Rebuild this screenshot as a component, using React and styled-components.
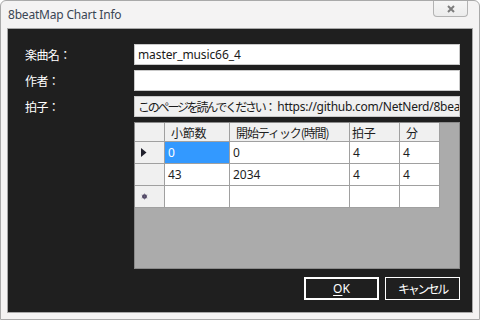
import React from "react";
import styled, { createGlobalStyle } from "styled-components";

const Global = createGlobalStyle`
  html, body { margin: 0; padding: 0; background: #ffffff; }
  body { width: 480px; height: 320px; overflow: hidden; }
`;

const UI = `"Noto Sans", "Noto Sans CJK JP", sans-serif`;
const JP = `"Noto Sans CJK JP", "Noto Sans", sans-serif`;

const Window = styled.div`
  box-sizing: border-box;
  width: 480px;
  height: 320px;
  border: 1px solid #a9a9a9;
  border-radius: 6px 6px 0 0;
  background: #f4f3f3;
  display: flex;
  flex-direction: column;
  padding: 0 6px 6px;
`;

const TitleBar = styled.div`
  height: 27px;
  flex: none;
  display: flex;
  align-items: flex-start;
`;

const Title = styled.div`
  font-family: ${UI};
  font-size: 12px;
  letter-spacing: -0.2px;
  color: #3a4654;
  padding: 6px 0 0 1px;
  line-height: 16px;
`;

const CloseButton = styled.div`
  margin-left: auto;
  margin-right: 5px;
  width: 35px;
  height: 16px;
  box-sizing: border-box;
  border: 1px solid #b3b3b3;
  border-top: none;
  border-radius: 0 0 4px 4px;
  background: linear-gradient(#f6f6f6, #ececec);
  display: flex;
  align-items: center;
  justify-content: center;
`;

const Client = styled.div`
  flex: 1;
  box-sizing: border-box;
  border: 1px solid #a8a8a8;
  background: #1f1f1f;
  padding: 15px 12px 12px 17px;
  display: flex;
  flex-direction: column;
`;

const Form = styled.div`
  flex: 1;
  display: grid;
  grid-template-columns: 109px 1fr;
  grid-template-rows: 21px 21px 21px 1fr;
  row-gap: 5px;
`;

const Label = styled.div`
  font-family: ${JP};
  font-size: 12px;
  letter-spacing: -0.6px;
  color: #ffffff;
  display: flex;
  align-items: center;
`;

const Field = styled.div`
  box-sizing: border-box;
  border: 1px solid #c9c9c9;
  background: ${(p) => (p.$readOnly ? "#f0f0f0" : "#ffffff")};
  font-family: ${UI};
  font-size: 12px;
  letter-spacing: -0.1px;
  color: #1a1a1a;
  padding: 0 3px;
  display: flex;
  align-items: center;
  white-space: nowrap;
  overflow: hidden;
`;

const JpSpan = styled.span`
  font-family: ${JP};
  letter-spacing: ${(p) => p.$ls || "0px"};
`;

const LatinSpan = styled.span`
  font-family: ${UI};
  letter-spacing: ${(p) => p.$ls || "0px"};
`;

const GridView = styled.div`
  box-sizing: border-box;
  border: 1px solid #8a8a8a;
  background: #ababab;
  overflow: hidden;
`;

const Table = styled.div`
  display: grid;
  grid-template-columns: 30px 65px 120px 50px 40px;
  grid-template-rows: 19px 22px 22px 22px;
  width: 305px;
`;

const Cell = styled.div`
  box-sizing: border-box;
  border-right: 1px solid #a0a0a0;
  border-bottom: 1px solid #a0a0a0;
  background: ${(p) => (p.$selected ? "#3399ff" : p.$header ? "#f0f0f0" : "#ffffff")};
  color: ${(p) => (p.$selected ? "#ffffff" : "#1e1e1e")};
  font-family: ${(p) => (p.$header ? JP : UI)};
  font-size: 12px;
  letter-spacing: ${(p) => p.$ls ?? "0px"};
  padding-left: ${(p) => p.$pad ?? 3}px;
  display: flex;
  align-items: center;
  white-space: nowrap;
  overflow: hidden;
`;

const ButtonRow = styled.div`
  flex: none;
  margin-top: 8px;
  display: flex;
  justify-content: flex-end;
  gap: 6px;
`;

const Button = styled.div`
  box-sizing: border-box;
  width: 75px;
  height: 23px;
  border: ${(p) => (p.$default ? "2px" : "1px")} solid #ffffff;
  color: #ffffff;
  font-family: ${(p) => (p.$jp ? JP : UI)};
  font-size: 12px;
  letter-spacing: ${(p) => (p.$jp ? "-2.2px" : "0")};
  display: flex;
  align-items: center;
  justify-content: center;
`;

const U = styled.span`
  text-decoration: underline;
  text-underline-offset: 2px;
`;

const CloseIcon = () => (
  <svg width="8" height="8" viewBox="0 0 8 8">
    <path d="M1 1 L7 7 M7 1 L1 7" stroke="#7d7d7d" strokeWidth="2" />
  </svg>
);

const CurrentRowIcon = () => (
  <svg width="6" height="9" viewBox="0 0 6 9">
    <path d="M0 0 L5.5 4.5 L0 9 Z" fill="#20202c" />
  </svg>
);

const NewRowIcon = () => (
  <svg width="7" height="7" viewBox="0 0 7 7">
    <circle cx="3.5" cy="3.5" r="2.3" fill="#3e3650" />
    <path d="M3.5 0.5 V6.5 M0.7 2 L6.3 5 M0.7 5 L6.3 2" stroke="#6a6080" strokeWidth="0.7" />
  </svg>
);

const headers = [
  { text: "小節数", pad: 6, ls: "-0.3px" },
  { text: "開始ティック(時間)", pad: 6, ls: "-1.1px" },
  { text: "拍子", pad: 2, ls: "-0.3px" },
  { text: "分", pad: 6, ls: "0px" },
];

const rows = [
  { cur: true, values: ["0", "0", "4", "4"] },
  { values: ["43", "2034", "4", "4"] },
  { isNew: true, values: ["", "", "", ""] },
];

export default function App() {
  return (
    <>
      <Global />
      <Window>
        <TitleBar>
          <Title>8beatMap Chart Info</Title>
          <CloseButton>
            <CloseIcon />
          </CloseButton>
        </TitleBar>
        <Client>
          <Form>
            <Label>楽曲名：</Label>
            <Field>master_music66_4</Field>
            <Label>作者：</Label>
            <Field />
            <Label>拍子：</Label>
            <Field $readOnly>
              <JpSpan $ls="-2.2px">このページを読んでください：</JpSpan>
              <LatinSpan $ls="-0.25px">&nbsp;https://github.com/NetNerd/8bea</LatinSpan>
            </Field>
            <div />
            <GridView>
              <Table>
                <Cell $header />
                {headers.map((h) => (
                  <Cell key={h.text} $header $pad={h.pad} $ls={h.ls}>
                    {h.text}
                  </Cell>
                ))}
                {rows.map((r, i) => (
                  <React.Fragment key={i}>
                    <Cell $header $pad={6}>
                      {r.cur && <CurrentRowIcon />}
                      {r.isNew && <NewRowIcon />}
                    </Cell>
                    {r.values.map((v, j) => (
                      <Cell key={j} $selected={r.cur && j === 0}>
                        {v}
                      </Cell>
                    ))}
                  </React.Fragment>
                ))}
              </Table>
            </GridView>
          </Form>
          <ButtonRow>
            <Button $default>
              <span>
                <U>O</U>K
              </span>
            </Button>
            <Button $jp>キャンセル</Button>
          </ButtonRow>
        </Client>
      </Window>
    </>
  );
}
